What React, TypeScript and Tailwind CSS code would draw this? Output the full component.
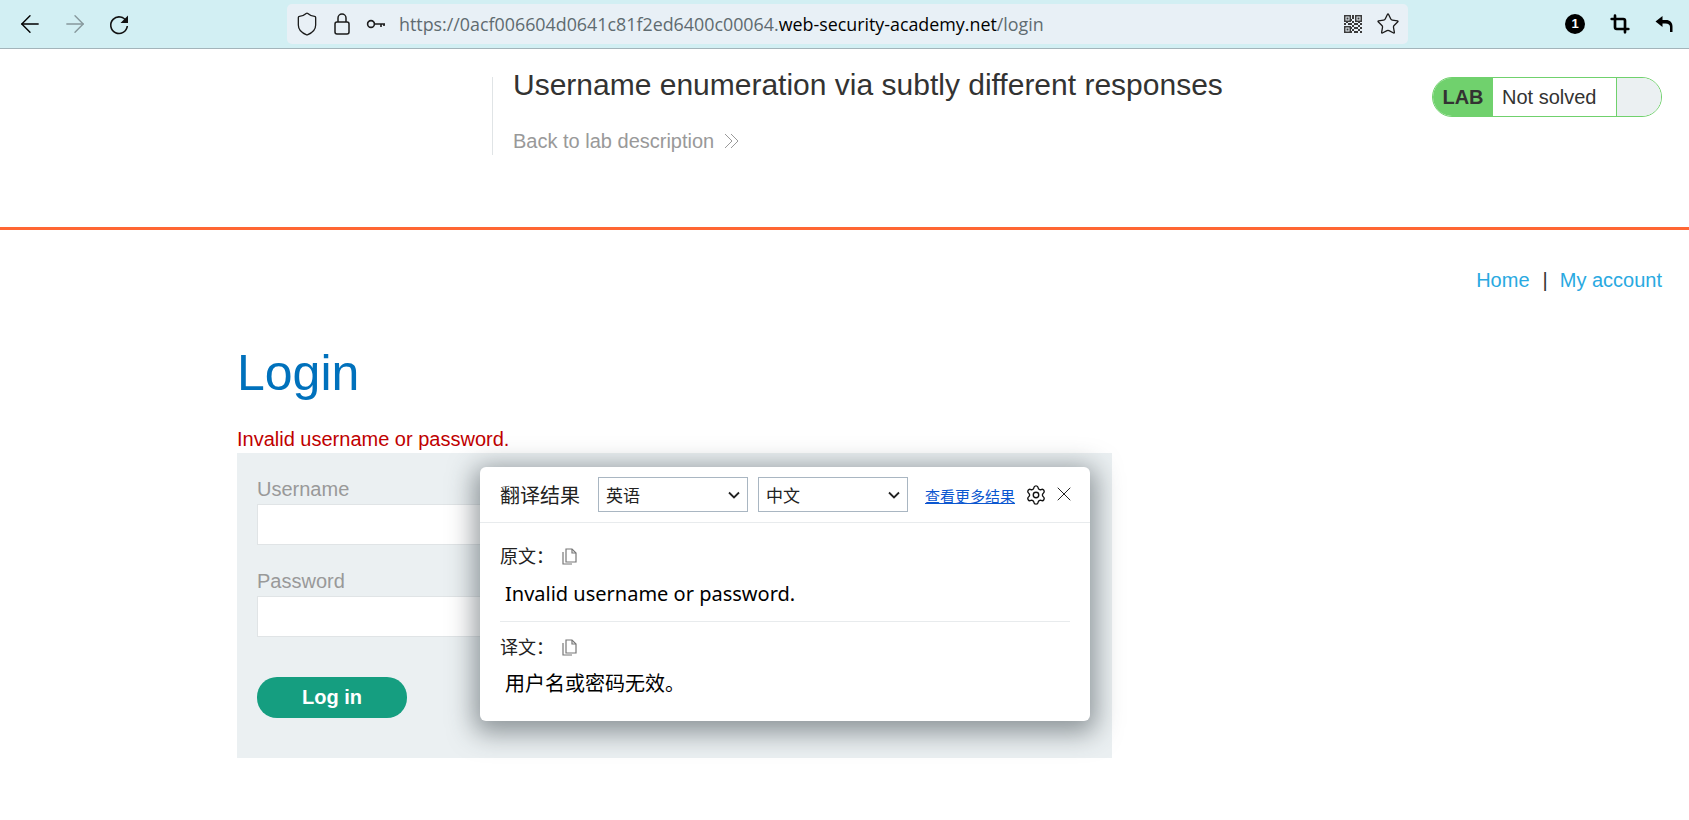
import { Crop, Settings, Shield, Star, X, ArrowLeft, ArrowRight } from "lucide-react";

function QrIcon() {
  // rough checker pattern between the three finder squares
  const cells = ["8,0", "8,2", "6,4", "8,6", "0,8", "2,6", "4,8", "6,8", "10,8", "14,6", "12,8", "8,10", "6,12", "10,12", "14,10", "12,12", "8,14", "14,14", "6,16", "10,16", "12,16", "16,8", "16,12", "16,16"];
  return (
    <svg width="18" height="18" viewBox="0 0 18 18" fill="#3b3b3b">
      <path d="M0 0h7v7H0zM1.500 1.500v4h4v-4zM11 0h7v7h-7zM12.500 1.500v4h4v-4zM0 11h7v7H0zM1.500 12.500v4h4v-4z" fillRule="evenodd" />
      <path d="M2.500 2.500h2v2h-2zM13.500 2.500h2v2h-2zM2.500 13.500h2v2h-2z" />
      {cells.map((c) => {
        const [x, y] = c.split(",");
        return <rect key={c} x={x} y={y} width="2" height="2" />;
      })}
    </svg>
  );
}

function PageIcon() {
  return (
    <svg width="15" height="17" viewBox="0 0 15 17" fill="none" stroke="#777" strokeWidth="1.2" className="ml-[8px]">
      <path d="M4 1h6l4 4v9H4z" />
      <path d="M10 1v4h4" />
      <path d="M1 4v12h9" />
    </svg>
  );
}

function LangSelect({ label }: { label: string }) {
  return (
    <div className="relative h-[35px] w-[150px]">
      <select className="h-full w-full appearance-none border border-[#a9b6c2] bg-white pl-[7px] pt-[2px] text-[17px] text-[#222]">
        <option>{label}</option>
      </select>
      <svg width="12" height="8" viewBox="0 0 12 8" fill="none" stroke="#222" strokeWidth="1.800" className="pointer-events-none absolute right-[8px] top-[14px]">
        <path d="M1 1.500l5 5 5-5" />
      </svg>
    </div>
  );
}

function Toolbar() {
  return (
    <div className="flex h-[49px] items-center border-b border-[#a3b4ba] bg-[#d2eff3] font-['Open_Sans',sans-serif]">
      <div className="flex w-[287px] items-center pl-[16px]">
        <ArrowLeft size={28} strokeWidth={1.2} className="text-black" />
        <ArrowRight size={28} strokeWidth={1.2} className="ml-[17px] text-[#87989c]" />
        <svg width="24" height="24" viewBox="0 0 24 24" fill="none" stroke="#111" strokeWidth="1.6" className="ml-[18px]">
          <path d="M19.500 9.500A8.300 8.300 0 1 0 20.300 14" />
          <path d="M21 3.500v7.500h-7.500z" fill="#111" stroke="none" />
        </svg>
      </div>
      <div className="flex h-[40px] w-[1121px] items-center rounded-[5px] bg-[#e8f0f6] pl-[7px]">
        <Shield size={26} strokeWidth={1.2} className="text-[#1b1b1b]" />
        <svg width="16" height="22" viewBox="0 0 16 22" fill="none" stroke="#1b1b1b" strokeWidth="1.500" className="ml-[14px]">
          <rect x="1" y="9" width="14" height="12" rx="2" />
          <path d="M4 9V5a4 4 0 0 1 8 0v4" />
        </svg>
        <svg width="20" height="12" viewBox="0 0 20 12" fill="none" stroke="#1b1b1b" strokeWidth="1.600" className="ml-[16px]">
          <circle cx="5" cy="6" r="3.400" />
          <path d="M8.500 6H19M15 6v3M18 6v2" />
        </svg>
        <div className="ml-[13px] text-[17.850px] text-[#5f6b70]">
          https://0acf006604d0641c81f2ed6400c00064.<span className="text-black">web-security-academy.net</span>/login
        </div>
        <div className="ml-auto flex items-center gap-[14px] pr-[8px]">
          <QrIcon />
          <Star size={24} strokeWidth={1.3} className="text-[#1b1b1b]" />
        </div>
      </div>
      <div className="flex flex-1 items-center justify-end pr-[16px]">
        <div className="flex h-[20px] w-[20px] items-center justify-center rounded-full bg-black font-['Liberation_Sans',sans-serif] text-[13px] font-bold text-white">1</div>
        <Crop size={20} strokeWidth={3.200} className="ml-[25px] text-black" />
        <svg width="18" height="18" viewBox="0 0 18 18" fill="black" className="ml-[25px]">
          <path d="M7.500 1 0.500 6.500 7.500 12V8.500h3c3 0 4.500 1.500 4.500 3.500v5h2.500v-5.500C17.500 7.500 15 5 11 5H7.500z" />
        </svg>
      </div>
    </div>
  );
}

function LabHeader() {
  return (
    <div className="flex h-[181px] border-b-[3px] border-[#ff6633] pt-[28px]">
      <div className="ml-[492px] h-[78px] border-l border-[#e0e4e6] pl-[20px]">
        <h2 className="-mt-[7px] text-[30px] leading-[30px] text-[#333332]">Username enumeration via subtly different responses</h2>
        <div className="mt-[28px] flex items-center text-[20px] leading-[26px] text-[#999]">
          Back to lab description
          <svg width="16" height="16" viewBox="0 0 16 16" fill="none" stroke="#999" strokeWidth="1" className="ml-[10px]">
            <path d="M1 1l7 7-7 7M7 1l7 7-7 7" />
          </svg>
        </div>
      </div>
      <div className="ml-auto mr-[27px] flex h-[40px] w-[230px] overflow-hidden rounded-[20px] border border-[#70d16d]">
        <div className="flex w-[60px] items-center justify-center bg-[#70d16d] text-[20px] font-bold text-[#333332]">LAB</div>
        <div className="flex w-[124px] items-center border-r border-[#70d16d] pl-[9px] text-[20px] text-[#333332]">Not solved</div>
        <div className="flex-1 bg-[#ebf0f2]" />
      </div>
    </div>
  );
}

function LoginForm() {
  return (
    <div className="relative">
      <div className="flex justify-end pr-[27px] pt-[37px] text-[20px] leading-[26px] text-[#333332]">
        <span className="text-[#29a9e1]">Home</span>
        <span className="ml-[13px] mr-[12px]">|</span>
        <span className="text-[#29a9e1]">My account</span>
      </div>
      <div className="ml-[237px] w-[875px]">
        <h1 className="mt-[50px] text-[50px] leading-[60px] text-[#0071bc]">Login</h1>
        <p className="mt-[23px] text-[20px] leading-[27px] text-[#c00000]">Invalid username or password.</p>
        <div className="h-[305px] bg-[#ebf0f2] px-[20px] pt-[25px]">
          <label className="block text-[20px] leading-[23px] text-[#999]">Username</label>
          <input className="mt-[3px] block h-[41px] w-[340px] border border-[#e0e4e6] bg-white" />
          <label className="mt-[25px] block text-[20px] leading-[23px] text-[#999]">Password</label>
          <input className="mt-[3px] block h-[41px] w-[340px] border border-[#e0e4e6] bg-white" />
          <button className="mt-[40px] block h-[41px] w-[150px] rounded-[20px] bg-[#159e80] pb-[2px] text-[20px] font-bold text-white">Log in</button>
        </div>
      </div>
    </div>
  );
}

function TranslatePopup() {
  return (
    <div className="absolute left-[480px] top-[467px] h-[254px] w-[610px] rounded-[6px] bg-white font-['Noto_Sans','Noto_Sans_CJK_SC',sans-serif] text-black shadow-[0_6px_26px_6px_rgba(50,60,65,0.5)]">
      <div className="flex h-[56px] items-center border-b border-[#e8ebed] pl-[20px]">
        <span className="mr-[18px] pt-[3px] text-[20px] text-[#222]">翻译结果</span>
        <LangSelect label="英语" />
        <div className="ml-[10px]">
          <LangSelect label="中文" />
        </div>
        <a className="ml-[17px] pt-[3px] text-[15px] text-[#0b57d0] underline">查看更多结果</a>
        <Settings size={22} strokeWidth={1.500} className="ml-[10px] text-[#111]" />
        <X size={24} strokeWidth={1} className="ml-[5px] -translate-y-px text-[#222]" />
      </div>
      <div className="px-[20px]">
        <div className="mt-[21px] flex h-[24px] items-center text-[18px] text-[#222]">
          原文：
          <PageIcon />
        </div>
        <p className="mt-[13px] pl-[5px] text-[20px] leading-[26px]">Invalid username or password.</p>
        <div className="mt-[14px] border-t border-[#e8ebed]" />
        <div className="mt-[13px] flex h-[24px] items-center text-[18px] text-[#222]">
          译文：
          <PageIcon />
        </div>
        <p className="mt-[12px] pl-[5px] text-[20px] leading-[26px]">用户名或密码无效。</p>
      </div>
    </div>
  );
}

export default function App() {
  return (
    <div className="relative h-[820px] overflow-hidden bg-white font-['Liberation_Sans',sans-serif]">
      <Toolbar />
      <LabHeader />
      <LoginForm />
      <TranslatePopup />
    </div>
  );
}
